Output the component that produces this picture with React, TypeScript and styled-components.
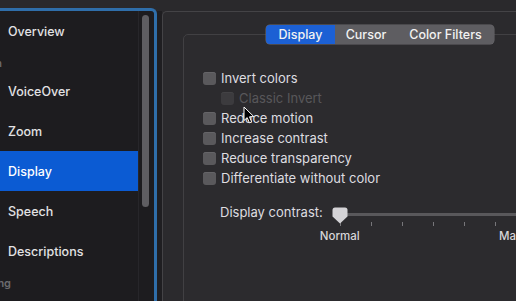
import styled, { createGlobalStyle } from "styled-components";

const GlobalStyle = createGlobalStyle`
  html, body {
    margin: 0;
    padding: 0;
    background: #2a292c;
  }
  body {
    font-family: "Inter", "Liberation Sans", sans-serif;
    -webkit-font-smoothing: antialiased;
  }
`;

const Window = styled.div`
  position: relative;
  width: 516px;
  height: 301px;
  overflow: hidden;
  display: flex;
  padding-top: 8px;
  box-sizing: border-box;
  background: #2a292c;
`;

const Sidebar = styled.div`
  flex-shrink: 0;
  width: 154px;
  display: flex;
  background: #1d1c1f;
  border-top: 3px solid #2f6eaa;
  border-right: 3px solid #2f6eaa;
  border-top-right-radius: 6px;
`;

const List = styled.div`
  width: 138px;
  display: flex;
  flex-direction: column;
`;

const Item = styled.div<{ $active?: boolean }>`
  height: 40px;
  display: flex;
  align-items: center;
  padding-left: 8px;
  font-size: 12.5px;
  font-weight: 500;
  color: ${(p) => (p.$active ? "#ffffff" : "#e2e2e4")};
  background: ${(p) => (p.$active ? "#0b5bd3" : "transparent")};
`;

const Section = styled.div<{ $visible: number }>`
  height: 20px;
  width: ${(p) => p.$visible}px;
  overflow: hidden;
  display: flex;
  justify-content: flex-end;
  align-items: center;
  padding-top: 3px;
  box-sizing: border-box;
  font-size: 11px;
  font-weight: 600;
  color: #6b6a6d;
  white-space: nowrap;
`;

const Scroller = styled.div`
  width: 16px;
  border-left: 1px solid #27262a;
  box-sizing: border-box;
  padding: 4px 0 0 3px;
`;

const Thumb = styled.div`
  width: 7px;
  height: 192px;
  border-radius: 4px;
  background: #5f5e62;
`;

const RightPane = styled.div`
  flex: 1;
  margin-top: 3px;
  border-left: 5px solid #1f1e21;
  display: flex;
`;

const Outer = styled.div`
  flex: 1;
  border-top: 1px solid #444346;
  border-left: 1px solid #444346;
  border-top-left-radius: 5px;
  background: #2b2a2d;
  padding: 22px 0 0 20px;
`;

const Group = styled.div`
  width: 392px;
  height: 300px;
  border: 1px solid #414043;
  border-radius: 5px;
  background: #2c2b2e;
`;

const Tabs = styled.div`
  display: flex;
  justify-content: center;
  margin-top: -10px;
`;

const Segmented = styled.div`
  display: flex;
  height: 19px;
  border-radius: 4px;
  overflow: hidden;
  background: #5e5d61;
  box-shadow: 0 0 0 0.5px #6a696d;
`;

const Segment = styled.div<{ $active?: boolean; $w: number }>`
  width: ${(p) => p.$w}px;
  display: flex;
  align-items: center;
  justify-content: center;
  font-size: 12.5px;
  font-weight: 500;
  color: #f2f2f2;
  background: ${(p) => (p.$active ? "#1c60d4" : "transparent")};
`;

const Options = styled.div`
  margin-top: 24px;
  padding-left: 19px;
  display: flex;
  flex-direction: column;
`;

const Row = styled.div<{ $indent?: boolean }>`
  height: 20px;
  display: flex;
  align-items: center;
  gap: 5px;
  padding-left: ${(p) => (p.$indent ? "18px" : "0")};
`;

const Box = styled.span<{ $disabled?: boolean }>`
  width: 13px;
  height: 13px;
  border-radius: 3px;
  background: ${(p) => (p.$disabled ? "#3c3b3e" : "#5a595c")};
  box-shadow: inset 0 1px 0 ${(p) => (p.$disabled ? "#434245" : "#656467")};
`;

const Label = styled.span<{ $disabled?: boolean }>`
  font-size: 13px;
  color: ${(p) => (p.$disabled ? "#58575a" : "#dedde0")};
`;

const ContrastRow = styled.div`
  margin-top: 16px;
  padding-left: 36px;
  display: flex;
  align-items: flex-start;
  gap: 9px;
`;

const ContrastLabel = styled.span`
  font-size: 13px;
  line-height: 16px;
  color: #dedde0;
`;

const Slider = styled.div`
  width: 230px;
  margin-top: 3px;
  display: flex;
  flex-direction: column;
`;

const TrackRow = styled.div`
  position: relative;
  height: 16px;
`;

const Track = styled.div`
  position: absolute;
  left: 8px;
  right: 0;
  top: 6px;
  height: 3px;
  border-radius: 2px;
  background: #59585b;
`;

const Knob = styled.svg`
  position: absolute;
  left: 0;
  top: 0;
`;

const Ticks = styled.div`
  display: flex;
  gap: 30px;
  padding-left: 8px;
  margin-top: -1px;
`;

const Tick = styled.span`
  width: 1px;
  height: 4px;
  background: #77767a;
`;

const TickLabels = styled.div`
  display: flex;
  gap: 126px;
  margin-left: -22px;
  margin-top: 3px;
`;

const TickLabel = styled.span`
  width: 60px;
  text-align: center;
  font-size: 11.5px;
  font-weight: 500;
  line-height: 14px;
  color: #d6d5d8;
`;

const Pointer = styled.svg`
  position: absolute;
  left: 243px;
  top: 106px;
`;

const options = [
  { label: "Invert colors" },
  { label: "Classic Invert", indent: true, disabled: true },
  { label: "Reduce motion" },
  { label: "Increase contrast" },
  { label: "Reduce transparency" },
  { label: "Differentiate without color" },
];

export default function App() {
  return (
    <>
      <GlobalStyle />
      <Window>
        <Sidebar>
          <List>
            <Item>Overview</Item>
            <Section $visible={2}>Vision</Section>
            <Item>VoiceOver</Item>
            <Item>Zoom</Item>
            <Item $active>Display</Item>
            <Item>Speech</Item>
            <Item>Descriptions</Item>
            <Section $visible={11}>Hearing</Section>
          </List>
          <Scroller>
            <Thumb />
          </Scroller>
        </Sidebar>
        <RightPane>
          <Outer>
            <Group>
              <Tabs>
                <Segmented>
                  <Segment $active $w={69}>Display</Segment>
                  <Segment $w={62}>Cursor</Segment>
                  <Segment $w={97}>Color Filters</Segment>
                </Segmented>
              </Tabs>
              <Options>
                {options.map((o) => (
                  <Row key={o.label} $indent={o.indent}>
                    <Box $disabled={o.disabled} />
                    <Label $disabled={o.disabled}>{o.label}</Label>
                  </Row>
                ))}
              </Options>
              <ContrastRow>
                <ContrastLabel>Display contrast:</ContrastLabel>
                <Slider>
                  <TrackRow>
                    <Track />
                    <Knob width="16" height="17" viewBox="0 0 16 17">
                      <path
                        d="M3 0.5 H13 Q15.5 0.5 15.5 3 V9.5 L8 16.5 L0.5 9.5 V3 Q0.5 0.5 3 0.5 Z"
                        fill="#d4d3d6"
                      />
                    </Knob>
                  </TrackRow>
                  <Ticks>
                    {Array.from({ length: 7 }).map((_, i) => (
                      <Tick key={i} />
                    ))}
                  </Ticks>
                  <TickLabels>
                    <TickLabel>Normal</TickLabel>
                    <TickLabel>Maximum</TickLabel>
                  </TickLabels>
                </Slider>
              </ContrastRow>
            </Group>
          </Outer>
        </RightPane>
        <Pointer width="12" height="18" viewBox="0 0 12 18">
          <path
            d="M1 1 L1 14.5 L4.2 11.6 L6.4 16.8 L8.6 15.8 L6.5 10.8 L10.8 10.6 Z"
            fill="#000"
            stroke="#fff"
            strokeWidth="1"
            strokeLinejoin="round"
          />
        </Pointer>
      </Window>
    </>
  );
}
